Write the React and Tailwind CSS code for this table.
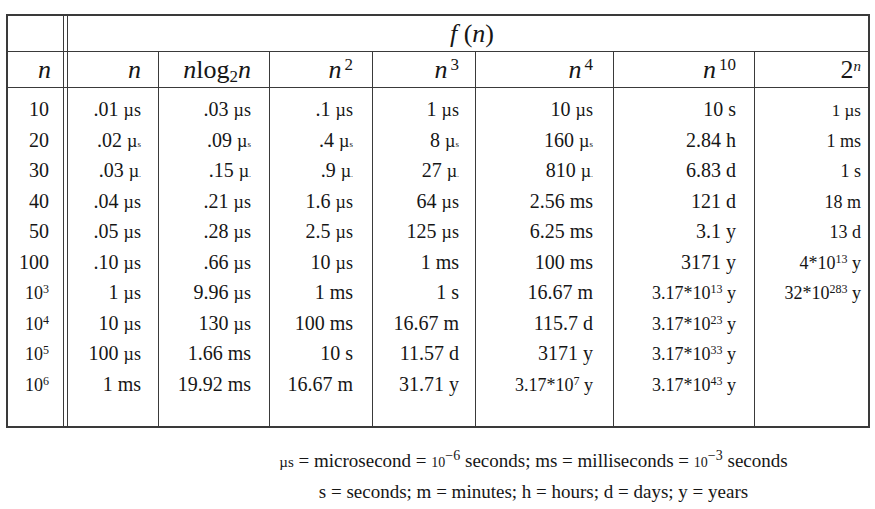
import React from 'react';

// µs units in the scan are set a touch smaller than the digits
const Us = () => <span className="text-[18px]">µs</span>;
const Usub = () => (
  <span className="text-[18px]">
    µ<span className="text-[9px]">s</span>
  </span>
);
const Udot = () => (
  <span className="text-[18px]">
    µ<span className="text-[8px]">.</span>
  </span>
);

const Pow = ({ base = '10', exp, unit, pre = '' }) => (
  <span className="text-[18px]">
    {pre}
    {base}
    <sup className="text-[12px]">{exp}</sup>
    {unit ? ` ${unit}` : ''}
  </span>
);

const firstCol = [
  '10',
  '20',
  '30',
  '40',
  '50',
  '100',
  <Pow exp="3" />,
  <Pow exp="4" />,
  <Pow exp="5" />,
  <Pow exp="6" />,
];

const columns = [
  {
    head: <i>n</i>,
    w: 'w-[91px]',
    pr: 'pr-[17px]',
    cells: [
      <>.01 <Us /></>,
      <>.02 <Usub /></>,
      <>.03 <Udot /></>,
      <>.04 <Us /></>,
      <>.05 <Us /></>,
      <>.10 <Us /></>,
      <>1 <Us /></>,
      <>10 <Us /></>,
      <>100 <Us /></>,
      '1 ms',
    ],
  },
  {
    head: (
      <>
        <i>n</i>log<sub className="text-[17px]">2</sub>
        <i>n</i>
      </>
    ),
    w: 'w-[111px]',
    pr: 'pr-[18px]',
    cells: [
      <>.03 <Us /></>,
      <>.09 <Usub /></>,
      <>.15 <Udot /></>,
      <>.21 <Us /></>,
      <>.28 <Us /></>,
      <>.66 <Us /></>,
      <>9.96 <Us /></>,
      <>130 <Us /></>,
      '1.66 ms',
      '19.92 ms',
    ],
  },
  {
    head: (
      <>
        <i>n</i>
        <sup className="text-[17px] ml-[3px]">2</sup>
      </>
    ),
    w: 'w-[103px]',
    pr: 'pr-[19px]',
    cells: [
      <>.1 <Us /></>,
      <>.4 <Usub /></>,
      <>.9 <Udot /></>,
      <>1.6 <Us /></>,
      <>2.5 <Us /></>,
      <>10 <Us /></>,
      '1 ms',
      '100 ms',
      '10 s',
      '16.67 m',
    ],
  },
  {
    head: (
      <>
        <i>n</i>
        <sup className="text-[17px] ml-[3px]">3</sup>
      </>
    ),
    w: 'w-[103px]',
    pr: 'pr-[16px]',
    cells: [
      <>1 <Us /></>,
      <>8 <Usub /></>,
      <>27 <Udot /></>,
      <>64 <Us /></>,
      <>125 <Us /></>,
      '1 ms',
      '1 s',
      '16.67 m',
      '11.57 d',
      '31.71 y',
    ],
  },
  {
    head: (
      <>
        <i>n</i>
        <sup className="text-[17px] ml-[3px]">4</sup>
      </>
    ),
    w: 'w-[138px]',
    pr: 'pr-[20px]',
    cells: [
      <>10 <Us /></>,
      <>160 <Usub /></>,
      <>810 <Udot /></>,
      '2.56 ms',
      '6.25 ms',
      '100 ms',
      '16.67 m',
      '115.7 d',
      '3171 y',
      <Pow pre="3.17*" exp="7" unit="y" />,
    ],
  },
  {
    head: (
      <>
        <i>n</i>
        <sup className="text-[17px] ml-[3px]">10</sup>
      </>
    ),
    w: 'w-[141px]',
    pr: 'pr-[18px]',
    cells: [
      '10 s',
      '2.84 h',
      '6.83 d',
      '121 d',
      '3.1 y',
      '3171 y',
      <Pow pre="3.17*" exp="13" unit="y" />,
      <Pow pre="3.17*" exp="23" unit="y" />,
      <Pow pre="3.17*" exp="33" unit="y" />,
      <Pow pre="3.17*" exp="43" unit="y" />,
    ],
  },
  {
    head: (
      <>
        2<sup className="text-[15px] italic">n</sup>
      </>
    ),
    w: 'flex-1',
    pr: 'pr-[7px]',
    last: true,
    cells: [
      <span className="text-[17px]">1 µs</span>,
      <span className="text-[18px]">1 ms</span>,
      <span className="text-[18px]">1 s</span>,
      <span className="text-[18px]">18 m</span>,
      <span className="text-[18px]">13 d</span>,
      <Pow pre="4*" exp="13" unit="y" />,
      <Pow pre="32*" exp="283" unit="y" />,
      '',
      '',
      '',
    ],
  },
];

export default function App() {
  return (
    <div
      className="w-[875px] h-[509px] bg-white text-[#161616] overflow-hidden"
      style={{ fontFamily: '"Liberation Serif", "Times New Roman", serif' }}
    >
      {/* Table */}
      <div className="ml-[6px] mt-[14px] w-[864px] h-[414px] border-2 border-[#3a3a3a] flex">
        {/* n column */}
        <div className="w-[56px] border-r border-[#3a3a3a] flex flex-col">
          <div className="h-[36px] border-b border-[#3a3a3a]" />
          <div className="h-[36px] border-b border-[#3a3a3a] flex items-center justify-end pr-[12px] text-[26px] italic">
            <span>n</span>
          </div>
          <div className="pt-[6px]">
            {firstCol.map((v, i) => (
              <div key={i} className="h-[30.5px] flex items-center justify-end pr-[14px] text-[20px]">
                <span>{v}</span>
              </div>
            ))}
          </div>
        </div>

        {/* double rule gap */}
        <div className="w-[3px] flex flex-col">
          <div className="h-[36px] border-b border-[#3a3a3a]" />
          <div className="h-[36px] border-b border-[#3a3a3a]" />
        </div>

        {/* f(n) block */}
        <div className="flex-1 border-l border-[#3a3a3a] flex flex-col">
          <div className="h-[36px] border-b border-[#3a3a3a] flex items-center justify-center text-[26px] pl-[8px]">
            <span>
              <i>f</i>&nbsp;(<i>n</i>)
            </span>
          </div>
          <div className="flex-1 flex">
            {columns.map((c, ci) => (
              <div
                key={ci}
                className={`${c.w} flex flex-col ${c.last ? '' : 'border-r border-[#3a3a3a]'}`}
              >
                <div className={`h-[36px] border-b border-[#3a3a3a] flex items-center justify-end ${c.pr} text-[26px]`}>
                  <span>{c.head}</span>
                </div>
                <div className="pt-[6px]">
                  {c.cells.map((v, i) => (
                    <div
                      key={i}
                      className={`h-[30.5px] flex items-center justify-end ${c.pr} text-[20px] whitespace-nowrap`}
                    >
                      <span>{v}</span>
                    </div>
                  ))}
                </div>
              </div>
            ))}
          </div>
        </div>
      </div>

      {/* Legend */}
      <div className="pl-[192px] pt-[18px] flex flex-col items-center text-[19px] leading-[29px] text-[#161616]">
        <p className="whitespace-nowrap">
          <span className="text-[15px]">µs</span> = microsecond = <span className="text-[14px]">10</span>
          <sup className="text-[14px]">−6</sup> seconds; ms = milliseconds = <span className="text-[14px]">10</span>
          <sup className="text-[14px]">−3</sup> seconds
        </p>
        <p className="whitespace-nowrap">s = seconds; m = minutes; h = hours; d = days; y = years</p>
      </div>
    </div>
  );
}
